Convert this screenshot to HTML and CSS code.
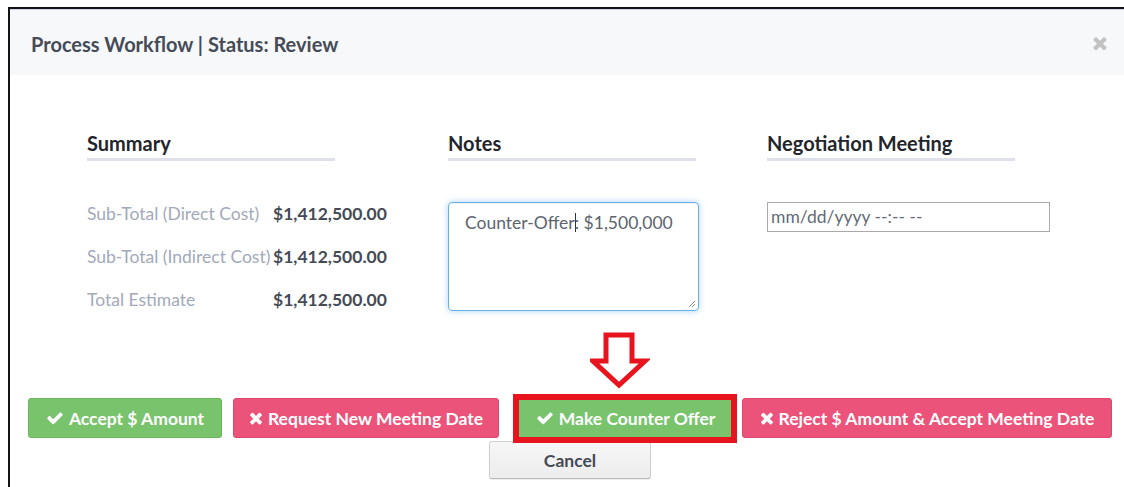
FILE: index.html
```html
<!DOCTYPE html>
<html lang="en">
<head>
<meta charset="utf-8">
<title>Process Workflow</title>
<link rel="stylesheet" href="styles.css">
</head>
<body>
<div class="frame">
  <div class="modal-header">
    <h4 class="modal-title">Process Workflow | Status: Review</h4>
    <button class="close" type="button" aria-label="Close">
      <svg viewBox="0 0 1408 1792" class="ico-times"><path d="M1298 1322q0 40-28 68l-136 136q-28 28-68 28t-68-28l-294-294-294 294q-28 28-68 28t-68-28l-136-136q-28-28-28-68t28-68l294-294-294-294q-28-28-28-68t28-68l136-136q28-28 68-28t68 28l294 294 294-294q28-28 68-28t68 28l136 136q28 28 28 68t-28 68l-294 294 294 294q28 28 28 68z"/></svg>
    </button>
  </div>

  <div class="modal-body">
    <div class="columns">
      <section class="col col-summary">
        <h5 class="col-title">Summary</h5>
        <div class="rows">
          <div class="row"><span class="label">Sub-Total (Direct Cost)</span><span class="value">$1,412,500.00</span></div>
          <div class="row"><span class="label">Sub-Total (Indirect Cost)</span><span class="value">$1,412,500.00</span></div>
          <div class="row"><span class="label">Total Estimate</span><span class="value">$1,412,500.00</span></div>
        </div>
      </section>
      <section class="col col-notes">
        <h5 class="col-title">Notes</h5>
        <div class="textarea">Counter-Offer<span class="caret"></span>: $1,500,000
          <svg class="grip" viewBox="0 0 10 10"><path d="M9 3 3 9M9 6 6 9" /></svg>
        </div>
      </section>
      <section class="col col-meeting">
        <h5 class="col-title">Negotiation Meeting</h5>
        <div class="date-input">mm/dd/yyyy --:-- --</div>
      </section>
    </div>

    <div class="actions">
      <button class="btn btn-green btn-accept" type="button">
        <svg viewBox="0 0 1792 1792" class="ico-check"><path d="M1671 566q0 40-28 68l-724 724-136 136q-28 28-68 28t-68-28l-136-136-362-362q-28-28-28-68t28-68l136-136q28-28 68-28t68 28l294 295 656-657q28-28 68-28t68 28l136 136q28 28 28 68z"/></svg>Accept $ Amount
      </button>
      <button class="btn btn-pink btn-request" type="button">
        <svg viewBox="0 0 1408 1792" class="ico-times"><path d="M1298 1322q0 40-28 68l-136 136q-28 28-68 28t-68-28l-294-294-294 294q-28 28-68 28t-68-28l-136-136q-28-28-28-68t28-68l294-294-294-294q-28-28-28-68t28-68l136-136q28-28 68-28t68 28l294 294 294-294q28-28 68-28t68 28l136 136q28 28 28 68t-28 68l-294 294 294 294q28 28 28 68z"/></svg>Request New Meeting Date
      </button>
      <button class="btn btn-green btn-counter" type="button">
        <svg viewBox="0 0 1792 1792" class="ico-check"><path d="M1671 566q0 40-28 68l-724 724-136 136q-28 28-68 28t-68-28l-136-136-362-362q-28-28-28-68t28-68l136-136q28-28 68-28t68 28l294 295 656-657q28-28 68-28t68 28l136 136q28 28 28 68z"/></svg>Make Counter Offer
        <svg class="pointer" viewBox="0 0 60 58"><path d="M16 3H42V29H55L29 53 3 29H16Z"/></svg>
      </button>
      <button class="btn btn-pink btn-reject" type="button">
        <svg viewBox="0 0 1408 1792" class="ico-times"><path d="M1298 1322q0 40-28 68l-136 136q-28 28-68 28t-68-28l-294-294-294 294q-28 28-68 28t-68-28l-136-136q-28-28-28-68t28-68l294-294-294-294q-28-28-28-68t28-68l136-136q28-28 68-28t68 28l294 294 294-294q28-28 68-28t68 28l136 136q28 28 28 68t-28 68l-294 294 294 294q28 28 28 68z"/></svg>Reject $ Amount &amp; Accept Meeting Date
      </button>
    </div>
    <div class="cancel-row">
      <button class="btn btn-cancel" type="button">Cancel</button>
    </div>
  </div>
</div>
</body>
</html>
```

FILE: styles.css
```css
* { box-sizing: border-box; }

html, body {
  margin: 0;
  background: #fff;
  font-family: Lato, "Open Sans", "Liberation Sans", sans-serif;
  overflow: hidden;
}

.frame {
  margin: 7px 0 0 8px;
  height: 480px;
  border-top: 2px solid #141414;
  border-left: 2px solid #141414;
}

/* header */
.modal-header {
  height: 66px;
  background: #f7f8fa;
  border-top: 1px solid #c9d3e3;
  display: flex;
  align-items: center;
  justify-content: space-between;
  padding: 0 15px 0 21px;
}

.modal-title {
  margin: 0;
  font-size: 20px;
  font-weight: 700;
  color: #454b57;
  padding-top: 2px;
}

.close {
  border: 0;
  background: none;
  padding: 0;
  width: 18px;
  height: 18px;
  display: flex;
  margin-top: -2px;
}
.close .ico-times { width: 18px; height: 20px; fill: #c3c3c3; }

/* body */
.modal-body { padding-top: 54px; }

.columns {
  display: grid;
  grid-template-columns: 361px 319px 1fr;
  padding-left: 77px;
}

.col-title {
  margin: 0 0 41px;
  width: 248px;
  font-size: 20px;
  font-weight: 700;
  color: #23252b;
  line-height: 24px;
  padding: 2px 0 3px;
  border-bottom: 3px solid #dfe1ea;
}

.rows {
  display: flex;
  flex-direction: column;
  gap: 21px;
}

.row {
  display: flex;
  height: 22px;
  align-items: center;
  font-size: 17.5px;
}

.label {
  width: 186px;
  color: #a2a9ba;
  white-space: nowrap;
}

.value {
  font-weight: 700;
  color: #454b55;
}

.textarea {
  position: relative;
  width: 251px;
  height: 109px;
  border: 1px solid #66afe9;
  border-radius: 4px;
  box-shadow: inset 0 1px 1px rgba(0, 0, 0, .05), 0 0 6px rgba(102, 175, 233, .55);
  padding: 9px 16px;
  font-size: 17.5px;
  color: #5d6470;
  line-height: 22px;
}

.caret {
  display: inline-block;
  width: 1px;
  height: 19px;
  background: #333;
  vertical-align: -3px;
  margin-right: -1px;
}

.grip {
  position: absolute;
  right: 2px;
  bottom: 2px;
  width: 10px;
  height: 10px;
  stroke: #888;
  stroke-width: 1;
  fill: none;
}

.date-input {
  width: 283px;
  height: 30px;
  border: 1px solid #a9a9a9;
  padding: 3px 3px;
  font-size: 17.5px;
  color: #646b77;
  line-height: 22px;
}

/* buttons */
.actions {
  display: flex;
  padding-left: 18px;
  margin-top: 87px;
}

.btn {
  font-family: inherit;
  font-size: 17.5px;
  font-weight: 700;
  height: 40px;
  border-radius: 3px;
  border: 1px solid transparent;
  display: inline-flex;
  align-items: center;
  justify-content: center;
  gap: 5px;
  padding: 0;
  color: #fff;
  cursor: pointer;
}

.btn svg.ico-check { width: 18px; height: 18px; fill: #fff; }
.btn svg.ico-times { width: 14px; height: 18px; fill: #fff; }

.btn-green { background: #79c36c; border-color: #6cb55f; }
.btn-pink { background: #ec537a; border-color: #d9496d; }

.btn-accept { width: 194px; }
.btn-request { width: 266px; margin-left: 11px; }
.btn-counter { width: 221px; margin-left: 16px; position: relative; }
.btn-reject { width: 370px; margin-left: 6px; }

/* emphasis frame drawn around the counter-offer button */
.btn-counter::after {
  content: "";
  position: absolute;
  left: -3px;
  right: -2px;
  top: -5px;
  bottom: -6px;
  border: 6px solid #e8141d;
  z-index: 2;
  pointer-events: none;
}

.pointer {
  position: absolute;
  left: 74px;
  top: -67px;
  width: 60px;
  height: 58px;
  fill: none;
  stroke: #e8141d;
  stroke-width: 5;
  stroke-linejoin: miter;
}

.cancel-row {
  display: flex;
  padding-left: 479px;
  margin-top: 3px;
}

.btn-cancel {
  width: 162px;
  height: 38px;
  color: #454b55;
  background: linear-gradient(#f7f7f7, #ececec);
  border: 1px solid #cfcfcf;
  border-bottom-color: #b9b9b9;
  border-radius: 3px;
  box-shadow: 0 1px 1px rgba(0, 0, 0, .08);
}
```
